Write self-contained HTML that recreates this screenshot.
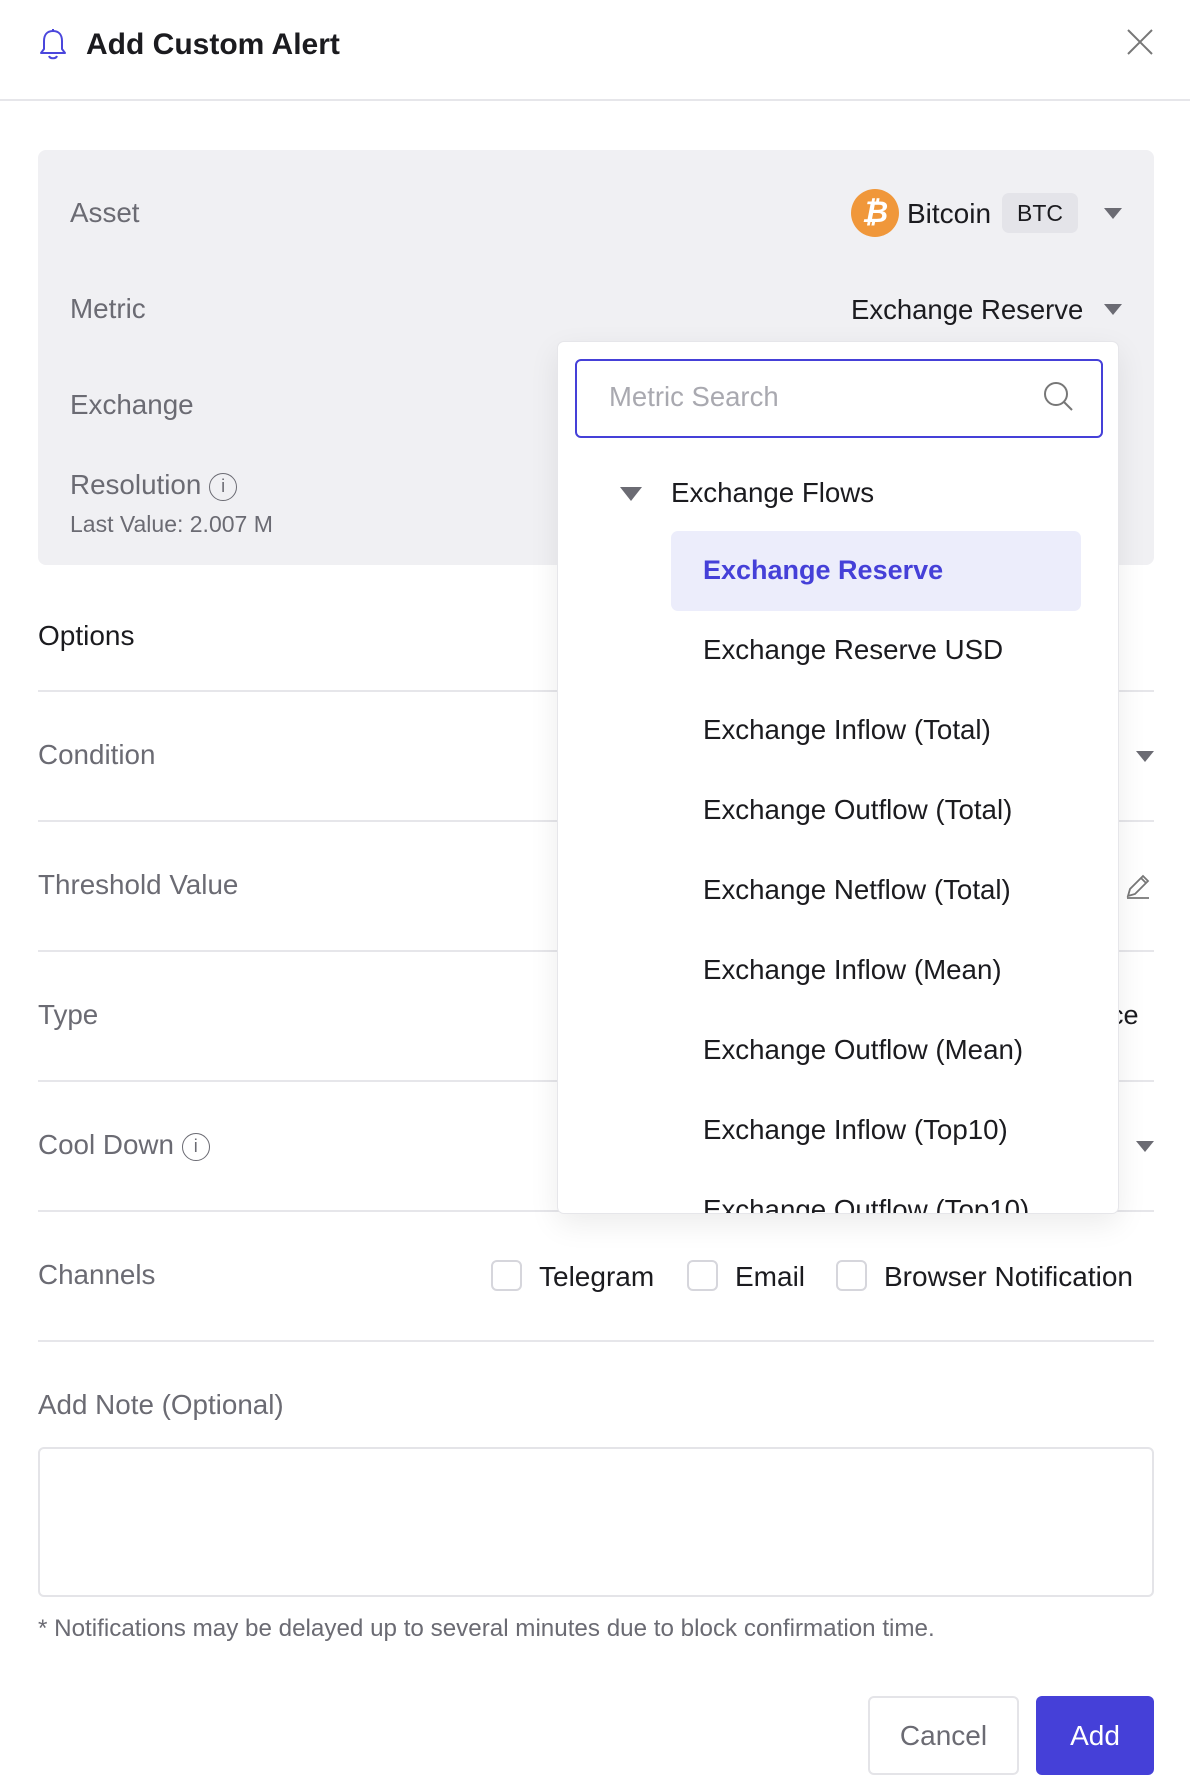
<!DOCTYPE html>
<html><head><meta charset="utf-8"><style>
*{box-sizing:border-box;margin:0;padding:0}
body{width:1190px;height:1784px;background:#fff;font-family:"Liberation Sans",sans-serif;position:relative;overflow:hidden;color:#1b1b1f}
.a{position:absolute;white-space:nowrap}
.lbl{color:#6b6b73;font-size:27.8px;line-height:30px}
.hr{position:absolute;left:38px;width:1116px;height:2px;background:#e6e6ea}
.tri{position:absolute;width:0;height:0;border-left:9px solid transparent;border-right:9px solid transparent;border-top:11px solid #6b6b73}
.item{position:absolute;left:702px;font-size:27.7px;line-height:30px;color:#1b1b1f}
.cb{position:absolute;width:31px;height:31px;border:2px solid #d6d6dc;border-radius:6px;background:#fff}
.info{display:inline-block;width:28px;height:28px;border:1.5px solid #6b6b73;border-radius:50%;font-size:18px;line-height:25px;text-align:center;vertical-align:2px}
</style></head><body>
<svg class="a" style="left:38px;top:28px" width="30" height="34" viewBox="0 0 30 34"><path d="M15 3c-6 0-9 4-9 10v8l-3 4h24l-3-4v-8c0-6-3-10-9-10z M15 1v2 M11 28c1 3 7 3 8 0" fill="none" stroke="#4a46dc" stroke-width="2" stroke-linejoin="round"/></svg>
<div class="a" style="left:86px;top:27px;font-size:30px;font-weight:bold;line-height:36px">Add Custom Alert</div>
<svg class="a" style="left:1126px;top:28px" width="28" height="28"><path d="M2 2L26 26M26 2L2 26" stroke="#777" stroke-width="2"/></svg>
<div class="a" style="left:0;top:99px;width:1190px;height:2px;background:#e6e6ea"></div>

<div class="a" style="left:38px;top:150px;width:1116px;height:415px;background:#f0f0f3;border-radius:8px"></div>
<div class="a lbl" style="left:70px;top:198px">Asset</div>
<div class="a" style="left:851px;top:189px;width:48px;height:48px;border-radius:50%;background:#f0973a;color:#fff;font-weight:bold;font-size:30px;line-height:48px;text-align:center;font-style:italic">₿</div>
<div class="a" style="left:907px;top:198px;font-size:28px">Bitcoin</div>
<div class="a" style="left:1002px;top:193px;width:76px;height:40px;background:#e4e4e9;border-radius:7px;font-size:23px;line-height:40px;text-align:center">BTC</div>
<div class="tri" style="left:1104px;top:208px"></div>
<div class="a lbl" style="left:70px;top:294px">Metric</div>
<div class="a" style="left:851px;top:294px;font-size:27.5px">Exchange Reserve</div>
<div class="tri" style="left:1104px;top:304px"></div>
<div class="a lbl" style="left:70px;top:390px">Exchange</div>
<div class="a lbl" style="left:70px;top:470px">Resolution <span class="info">i</span></div>
<div class="a" style="left:70px;top:511px;font-size:23px;color:#6b6b73">Last Value: 2.007 M</div>

<div class="a" style="left:38px;top:620px;font-size:28px">Options</div>
<div class="hr" style="top:690px"></div>
<div class="a lbl" style="left:38px;top:740px">Condition</div>
<div class="tri" style="left:1136px;top:751px"></div>
<div class="hr" style="top:820px"></div>
<div class="a lbl" style="left:38px;top:870px">Threshold Value</div>
<svg class="a" style="left:1124px;top:872px" width="28" height="28"><path d="M4 24l2-7L19 4l5 5L11 22zM17 6l5 5M3 26h22" fill="none" stroke="#777" stroke-width="1.8"/></svg>
<div class="hr" style="top:950px"></div>
<div class="a lbl" style="left:38px;top:1000px">Type</div>
<div class="a" style="left:1110px;top:1000px;font-size:27px">ce</div>
<div class="hr" style="top:1080px"></div>
<div class="a lbl" style="left:38px;top:1130px">Cool Down <span class="info">i</span></div>
<div class="tri" style="left:1136px;top:1141px"></div>
<div class="hr" style="top:1210px"></div>
<div class="a lbl" style="left:38px;top:1260px">Channels</div>
<div class="cb" style="left:491px;top:1260px"></div><div class="a" style="left:539px;top:1261px;font-size:28px">Telegram</div>
<div class="cb" style="left:687px;top:1260px"></div><div class="a" style="left:735px;top:1261px;font-size:28px">Email</div>
<div class="cb" style="left:836px;top:1260px"></div><div class="a" style="left:884px;top:1261px;font-size:28px">Browser Notification</div>
<div class="hr" style="top:1340px"></div>
<div class="a lbl" style="left:38px;top:1390px">Add Note (Optional)</div>
<div class="a" style="left:38px;top:1447px;width:1116px;height:150px;border:2px solid #e4e4e8;border-radius:6px"></div>
<div class="a" style="left:38px;top:1615px;font-size:24.2px;color:#6b6b73">* Notifications may be delayed up to several minutes due to block confirmation time.</div>
<div class="a" style="left:868px;top:1696px;width:151px;height:79px;border:2px solid #e4e4e8;border-radius:6px;font-size:28px;line-height:75px;text-align:center;color:#6b6b73">Cancel</div>
<div class="a" style="left:1036px;top:1696px;width:118px;height:79px;background:#4540d8;border-radius:6px;font-size:28px;line-height:79px;text-align:center;color:#fff">Add</div>

<div class="a" style="left:557px;top:341px;width:562px;height:873px;background:#fff;border:1px solid #e6e6ea;border-radius:7px;box-shadow:0 10px 30px rgba(0,0,0,.08);overflow:hidden">
<div class="a" style="left:17px;top:17px;width:528px;height:79px;border:2px solid #4540d8;border-radius:6px"></div>
<div class="a" style="left:51px;top:39px;font-size:27.5px;color:#a9a9b0">Metric Search</div>
<svg class="a" style="left:484px;top:38px" width="34" height="34"><circle cx="14" cy="14" r="11" fill="none" stroke="#777" stroke-width="2"/><path d="M22 22l8 8" stroke="#777" stroke-width="2"/></svg>
<div class="tri" style="left:62px;top:145px;border-left-width:11px;border-right-width:11px;border-top-width:14px"></div>
<div class="a" style="left:113px;top:135px;font-size:27.7px">Exchange Flows</div>
<div class="a" style="left:113px;top:189px;width:410px;height:80px;background:#ecedfb;border-radius:7px"></div>
<div class="item" style="left:145px;top:213px;color:#4540d8;font-weight:bold;font-size:27px">Exchange Reserve</div>
<div class="item" style="left:145px;top:293px">Exchange Reserve USD</div>
<div class="item" style="left:145px;top:373px">Exchange Inflow (Total)</div>
<div class="item" style="left:145px;top:453px">Exchange Outflow (Total)</div>
<div class="item" style="left:145px;top:533px">Exchange Netflow (Total)</div>
<div class="item" style="left:145px;top:613px">Exchange Inflow (Mean)</div>
<div class="item" style="left:145px;top:693px">Exchange Outflow (Mean)</div>
<div class="item" style="left:145px;top:773px">Exchange Inflow (Top10)</div>
<div class="item" style="left:145px;top:853px">Exchange Outflow (Top10)</div>
</div>
</body></html>
